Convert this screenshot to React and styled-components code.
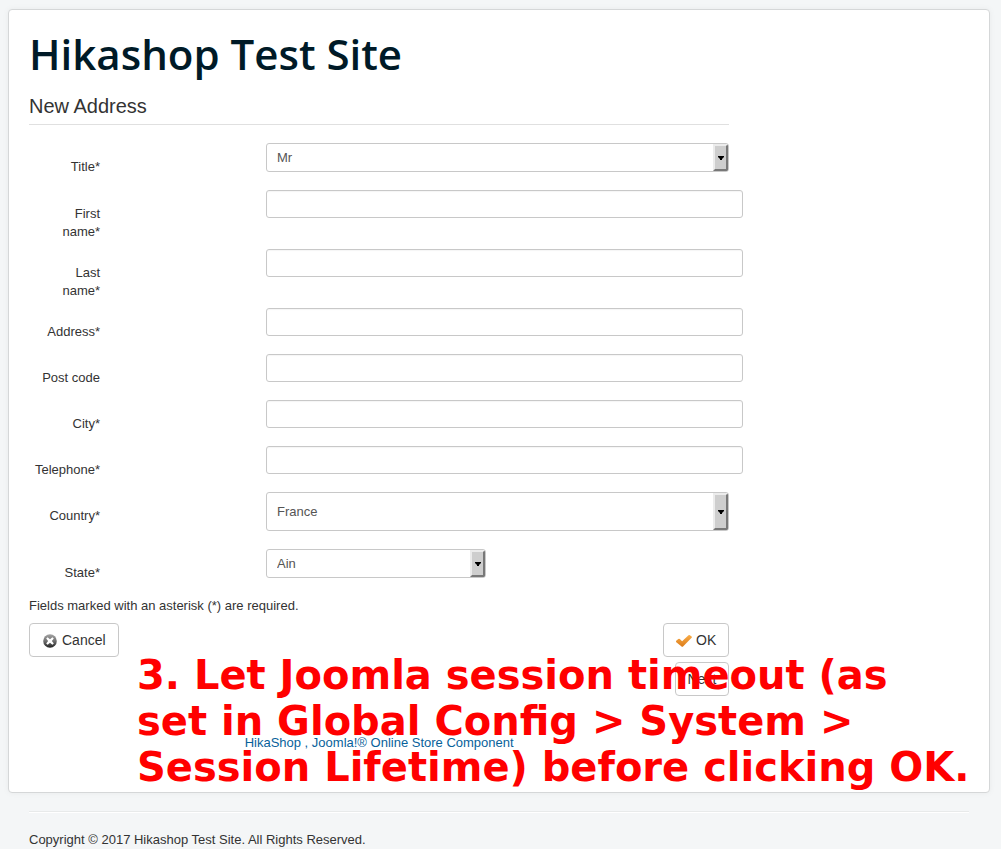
import React from "react";
import styled, { createGlobalStyle } from "styled-components";

const GlobalStyle = createGlobalStyle`
  *, *::before, *::after { box-sizing: border-box; }
  body {
    margin: 0;
    background: #f4f6f7;
    color: #333;
    font: 13px/18px "Liberation Sans", Arial, sans-serif;
  }
`;

const Page = styled.div`
  padding: 9px 11px 0 8px;
`;

const Card = styled.main`
  position: relative;
  padding: 20px;
  background: #fff;
  border: 1px solid #d5d7d8;
  border-radius: 4px;
  box-shadow: 0 0 6px rgba(0, 0, 0, 0.05);
`;

const SiteTitle = styled.h1`
  margin: 0;
  color: #001a27;
  font: 600 42px/48px "Open Sans", sans-serif;
`;

const Content = styled.div`
  width: 74.5%;
`;

const Heading = styled.h2`
  margin: 15px 0 18px;
  padding-bottom: 5px;
  border-bottom: 1px solid #e0e0e0;
  font-size: 20px;
  font-weight: 400;
  line-height: 26px;
`;

const Row = styled.div`
  display: grid;
  grid-template-columns: 71px 1fr;
  column-gap: 166px;
  align-items: start;
  padding-bottom: 8px;
`;

const Label = styled.label`
  padding: 15px 0 0 24px;
  margin-left: -24px;
  text-align: right;
`;

const NarrowLabel = styled(Label)`
  padding-left: 54px;
`;

const Control = styled.div`
  padding-bottom: 10px;
`;

const TextInput = styled.input`
  display: block;
  width: calc(100% + 14px);
  height: 28px;
  padding: 4px 10px;
  border: 1px solid #c8c8c8;
  border-radius: 3px;
  background: #fff;
  box-shadow: inset 0 1px 1px rgba(0, 0, 0, 0.04);
  color: #555;
  font: inherit;
`;

const SelectBox = styled.div`
  position: relative;
  width: ${(p) => (p.$short ? "220px" : "100%")};
`;

const SelectField = styled.select`
  display: block;
  appearance: none;
  width: 100%;
  height: ${(p) => (p.$tall ? 39 : 29)}px;
  padding: 0 24px 0 10px;
  border: 1px solid #c8c8c8;
  border-radius: 3px;
  background: #fff;
  color: #555;
  font: inherit;
`;

const Arrow = styled.span`
  position: absolute;
  top: 1px;
  right: 1px;
  bottom: 1px;
  width: 15px;
  display: flex;
  align-items: center;
  justify-content: center;
  background: #cecece;
  border: 2px solid;
  border-color: #ececec #787878 #787878 #ececec;
  border-radius: 0 2px 2px 0;
  pointer-events: none;
`;

const Hint = styled.p`
  margin: 1px 0 8px;
`;

const Actions = styled.div`
  display: flex;
  justify-content: space-between;
  align-items: flex-start;
`;

const Stack = styled.div`
  display: flex;
  flex-direction: column;
  align-items: flex-end;
  gap: 5px;
`;

const Button = styled.button`
  display: inline-flex;
  align-items: center;
  gap: 4px;
  height: 34px;
  padding: 0 12px;
  border: 1px solid #c8c8c8;
  border-radius: 4px;
  background: #fff;
  color: #333;
  font: 14px/20px "Liberation Sans", Arial, sans-serif;
`;

const Credit = styled.p`
  margin: 38px 0 20px;
  text-align: center;

  a {
    color: #08629b;
    text-decoration: none;
  }
`;

const Note = styled.p`
  position: absolute;
  left: 128px;
  bottom: 2px;
  margin: 0;
  color: #f00;
  font: 700 40px/46px "DejaVu Sans", sans-serif;
  white-space: nowrap;
  pointer-events: none;
`;

const Footer = styled.footer`
  margin: 18px 21px 0;
  padding-top: 19px;
  border-top: 1px solid #e8eaea;
  box-shadow: inset 0 1px 0 #fff;

  p { margin: 0; }
`;

function Select({ id, value, tall, short }) {
  return (
    <SelectBox $short={short}>
      <SelectField id={id} defaultValue={value} $tall={tall}>
        <option>{value}</option>
      </SelectField>
      <Arrow>
        <svg width="6" height="4" viewBox="0 0 6 4" aria-hidden="true">
          <path d="M0 0h6v1L4 3v1H2V3L0 1z" fill="#000" />
        </svg>
      </Arrow>
    </SelectBox>
  );
}

function CancelIcon() {
  return (
    <svg width="16" height="16" viewBox="0 0 16 16" aria-hidden="true">
      <defs>
        <linearGradient id="disc" x1="0" y1="0" x2="0" y2="1">
          <stop offset="0" stopColor="#a5a5a5" />
          <stop offset="0.5" stopColor="#707070" />
          <stop offset="1" stopColor="#222" />
        </linearGradient>
      </defs>
      <circle cx="8" cy="9" r="6.8" fill="url(#disc)" />
      <path
        d="M5.6 5.2 8 7.2l2.4-2L11.8 6.500 9.900 8.900l1.900 2.500-1.400 1.300L8 10.700l-2.400 2-1.400-1.300 1.900-2.500L4.200 6.500z"
        fill="#fff"
      />
    </svg>
  );
}

function OkIcon() {
  return (
    <svg width="16" height="16" viewBox="0 0 16 16" aria-hidden="true">
      <defs>
        <linearGradient id="tick" x1="0" y1="0" x2="0" y2="1">
          <stop offset="0" stopColor="#f9ad48" />
          <stop offset="1" stopColor="#dc7c1a" />
        </linearGradient>
      </defs>
      <path
        d="M.2 8.800 2.300 7q.8-.6 1.500.1l2.300 2.100L12.500 3.300q.7-.6 1.400-.1l1.700 1.300q.6.6 0 1.300L7.300 14.200q-1 1-2 0L.3 10.200q-.6-.7-.1-1.400z"
        fill="url(#tick)"
      />
    </svg>
  );
}

const textFields = [
  { id: "first", label: "First name*", narrow: true },
  { id: "last", label: "Last name*", narrow: true },
  { id: "address", label: "Address*" },
  { id: "postcode", label: "Post code" },
  { id: "city", label: "City*" },
  { id: "phone", label: "Telephone*" },
];

const selectFields = [
  { id: "country", label: "Country*", value: "France", tall: true },
  { id: "state", label: "State*", value: "Ain", short: true },
];

function SelectRow({ id, label, ...rest }) {
  return (
    <Row>
      <Label htmlFor={id}>{label}</Label>
      <Control>
        <Select id={id} {...rest} />
      </Control>
    </Row>
  );
}

export default function App() {
  return (
    <>
      <GlobalStyle />
      <Page>
        <Card>
          <SiteTitle>Hikashop Test Site</SiteTitle>
          <Content>
            <Heading>New Address</Heading>
            <form onSubmit={(e) => e.preventDefault()}>
              <SelectRow id="title" label="Title*" value="Mr" />
              {textFields.map(({ id, label, narrow }) => {
                const FieldLabel = narrow ? NarrowLabel : Label;
                return (
                  <Row key={id}>
                    <FieldLabel htmlFor={id}>{label}</FieldLabel>
                    <Control>
                      <TextInput id={id} type="text" />
                    </Control>
                  </Row>
                );
              })}
              {selectFields.map((f) => (
                <SelectRow key={f.id} {...f} />
              ))}
              <Hint>Fields marked with an asterisk (*) are required.</Hint>
              <Actions>
                <Button type="button">
                  <CancelIcon />
                  Cancel
                </Button>
                <Stack>
                  <Button type="submit">
                    <OkIcon />
                    OK
                  </Button>
                  <Button type="button">Next</Button>
                </Stack>
              </Actions>
            </form>
            <Credit>
              <a href="#hikashop">HikaShop , Joomla!® Online Store Component</a>
            </Credit>
          </Content>
          <Note>
            3. Let Joomla session timeout (as
            <br />
            set in Global Config &gt; System &gt;
            <br />
            Session Lifetime) before clicking OK.
          </Note>
        </Card>
        <Footer>
          <p>Copyright © 2017 Hikashop Test Site. All Rights Reserved.</p>
        </Footer>
      </Page>
    </>
  );
}
